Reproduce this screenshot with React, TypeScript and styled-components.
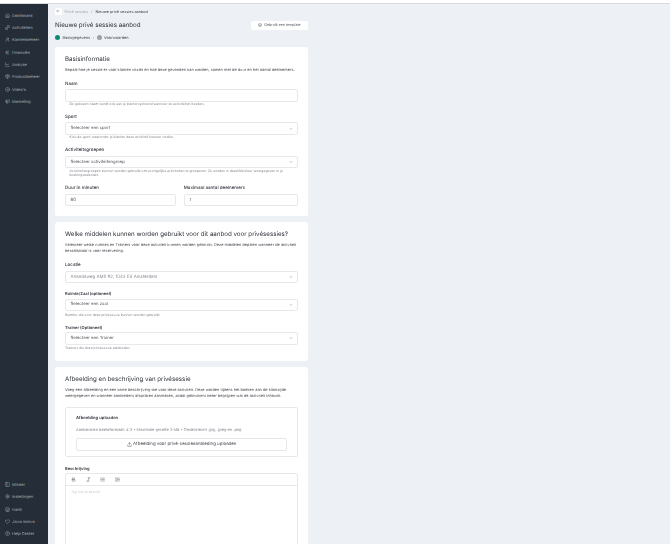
import React from "react";
import styled, { createGlobalStyle } from "styled-components";
import {
  Home, Dumbbell, UserRound, Euro, ChartLine, Package, Disc, Megaphone, PanelLeft, Settings, Store, Heart, CircleHelp,
  ArrowLeft, ChevronDown, Layers, Upload, Bold, Italic, List, ListOrdered,
} from "lucide-react";

const Global = createGlobalStyle`
  html, body { margin: 0; padding: 0; height: 544px; overflow: hidden; background: #edf0f5; }
  body { font-family: Inter, "Liberation Sans", sans-serif; color: #2b2f36; text-rendering: geometricPrecision; }
  * { box-sizing: border-box; }
`;

const Shell = styled.div`
  height: 544px;
  display: flex;
  flex-direction: column;
  overflow: hidden;
  filter: blur(0.35px);
`;
const TopStrip = styled.div`
  height: 4px;
  flex: none;
  background: #fff;
  border-bottom: 1px solid #d5d9df;
`;
const Body = styled.div`
  flex: 1;
  min-height: 0;
  display: flex;
`;
const Sidebar = styled.nav`
  width: 48px;
  flex: none;
  background: #252d38;
  display: flex;
  flex-direction: column;
  justify-content: space-between;
  padding: 5px 0 4px 5px;
`;
const NavGroup = styled.div`
  display: flex;
  flex-direction: column;
`;
const NavItem = styled.div`
  height: 12.35px;
  display: flex;
  align-items: center;
  gap: 2px;
  font-size: 3.95px;
  color: #a0a7b0;
  white-space: nowrap;
  svg { width: 5px; height: 5px; flex: none; stroke: #a6adb6; }
`;
const Main = styled.main`
  flex: 1;
  min-width: 0;
  padding: 3px 0 0 7px;
  overflow: hidden;
`;
const Column = styled.div`
  width: 253px;
  display: flex;
  flex-direction: column;
`;
const Crumbs = styled.div`
  height: 8px;
  display: flex;
  align-items: center;
  font-size: 3.8px;
  color: #a2a7af;
  gap: 3px;
`;
const BackButton = styled.span`
  width: 6.5px;
  height: 7px;
  background: #fff;
  border-radius: 1.5px;
  display: flex;
  align-items: center;
  justify-content: center;
  svg { width: 4px; height: 4px; stroke: #555; }
`;
const CrumbCurrent = styled.span`
  color: #3a3e45;
`;
const TitleRow = styled.div`
  display: flex;
  align-items: center;
  justify-content: space-between;
  margin-top: 5px;
  height: 10px;
`;
const PageTitle = styled.h1`
  margin: 0;
  font-size: 6.2px;
  font-weight: 400;
  color: #2a2e35;
`;
const TemplateButton = styled.button`
  width: 57px;
  height: 9px;
  padding: 0;
  background: #fff;
  border: 0;
  border-radius: 2px;
  font: inherit;
  font-size: 3.6px;
  color: #4a4e55;
  display: flex;
  align-items: center;
  justify-content: center;
  gap: 2px;
  svg { width: 4px; height: 4px; }
`;
const Steps = styled.div`
  display: flex;
  align-items: center;
  height: 6px;
  margin-top: 4.5px;
  font-size: 3.9px;
  color: #4c5057;
`;
const StepDot = styled.span<{ $active?: boolean }>`
  width: 5px;
  height: 5px;
  border-radius: 50%;
  background: ${(p) => (p.$active ? "#0e8a74" : "#9ba1a8")};
  margin-right: 2.4px;
`;
const StepSep = styled.span`
  margin: 0 2.5px;
  color: #9aa0a8;
`;
const Card = styled.section`
  background: #fff;
  border-radius: 2.5px;
  padding: 9px 10px 10px;
  margin-top: 6px;
  display: flex;
  flex-direction: column;
`;
const CardTitle = styled.h2`
  margin: 0;
  font-size: 6.2px;
  line-height: 8px;
  font-weight: 400;
  color: #2a2e35;
`;
const CardDesc = styled.p`
  margin: 3px 0 0;
  font-size: 3.88px;
  line-height: 6px;
  color: #4d5158;
`;
const Field = styled.div<{ $top?: number }>`
  display: flex;
  flex-direction: column;
  min-width: 0;
  margin-top: ${(p) => p.$top ?? 0}px;
`;
const Label = styled.label<{ $compact?: boolean }>`
  font-size: ${(p) => (p.$compact ? 4.1 : 4.5)}px;
  line-height: 5px;
  font-weight: ${(p) => (p.$compact ? 600 : 500)};
  color: #33373e;
  margin-bottom: 2.5px;
`;
const Input = styled.div`
  height: 12.5px;
  background: #fff;
  border: 0.5px solid #e6e8ec;
  border-radius: 2px;
  display: flex;
  align-items: center;
  justify-content: space-between;
  padding: 0 4.5px;
  font-size: 4.3px;
  color: #4f535a;
  svg { width: 4px; height: 4px; stroke: #555; }
`;
const MutedValue = styled.span`
  font-size: 4.4px;
  color: #8a8e95;
`;
const Hint = styled.div<{ $flush?: boolean }>`
  font-size: 3.4px;
  line-height: 4.6px;
  color: #80848b;
  margin-top: ${(p) => (p.$flush ? 1.5 : 0.5)}px;
  padding-left: ${(p) => (p.$flush ? 0 : 4.5)}px;
`;
const Row = styled.div`
  display: grid;
  grid-template-columns: 111fr 114fr;
  gap: 7.5px;
  margin-top: 8.5px;
`;
const UploadBox = styled.div`
  border: 0.5px solid #e6e8ec;
  border-radius: 2px;
  margin-top: 8px;
  padding: 8.5px 10px 0;
  height: 50.3px;
`;
const UploadTitle = styled.div`
  font-size: 4.2px;
  line-height: 5px;
  font-weight: 600;
  color: #33373e;
`;
const UploadInfo = styled.div`
  font-size: 3.94px;
  line-height: 5px;
  color: #8a8e95;
  margin-top: 5.6px;
`;
const UploadButton = styled.div`
  height: 12.7px;
  margin-top: 5.9px;
  border: 0.5px solid #e6e8ec;
  border-radius: 2px;
  display: flex;
  align-items: center;
  justify-content: center;
  gap: 1.5px;
  font-size: 4.4px;
  color: #4a4e55;
  svg { width: 5px; height: 5px; }
`;
const Editor = styled.div`
  border: 0.5px solid #e6e8ec;
  border-radius: 2px;
  height: 140px;
`;
const Toolbar = styled.div`
  height: 12px;
  border-bottom: 0.5px solid #e6e8ec;
  display: flex;
  align-items: center;
  gap: 9.5px;
  padding-left: 5px;
  svg { width: 5px; height: 5px; stroke: #444; }
`;
const Placeholder = styled.div`
  padding: 3.5px 5px;
  font-size: 3.4px;
  line-height: 5px;
  color: #c3c6cb;
`;

const top = [
  [Home, "Dashboard"], [Dumbbell, "Activiteiten"], [UserRound, "Klantenbeheer"], [Euro, "Financiën"],
  [ChartLine, "Analyse"], [Package, "Productbeheer"], [Disc, "Video's"], [Megaphone, "Marketing"],
] as const;
const bottom = [
  [PanelLeft, "Minder"], [Settings, "Instellingen"], [Store, "Hanti"], [Heart, "Jouw bonus"], [CircleHelp, "Help Center"],
] as const;

function Select({ children, muted }: { children: string; muted?: boolean }) {
  return (
    <Input>
      {muted ? <MutedValue>{children}</MutedValue> : <span>{children}</span>}
      <ChevronDown />
    </Input>
  );
}

export default function App() {
  return (
    <Shell>
      <Global />
      <TopStrip />
      <Body>
        <Sidebar>
          <NavGroup>
            {top.map(([I, t]) => <NavItem key={t}><I />{t}</NavItem>)}
          </NavGroup>
          <NavGroup>
            {bottom.map(([I, t]) => <NavItem key={t}><I />{t}</NavItem>)}
          </NavGroup>
        </Sidebar>
        <Main>
          <Column>
            <Crumbs>
              <BackButton><ArrowLeft /></BackButton>
              <span>Privé sessies</span>
              <span>/</span>
              <CrumbCurrent>Nieuwe privé sessies aanbod</CrumbCurrent>
            </Crumbs>
            <TitleRow>
              <PageTitle>Nieuwe privé sessies aanbod</PageTitle>
              <TemplateButton><Layers />Gebruik een template</TemplateButton>
            </TitleRow>
            <Steps>
              <StepDot $active />Basisgegevens
              <StepSep>›</StepSep>
              <StepDot />Voorwaarden
            </Steps>
            <Card>
              <CardTitle>Basisinformatie</CardTitle>
              <CardDesc>Bepaal hoe je sessie er voor klanten uitziet en hoe deze gevonden kan worden, samen met de duur en het aantal deelnemers.</CardDesc>
              <Field $top={9}>
                <Label>Naam</Label>
                <Input />
                <Hint>De gekozen naam wordt ook aan je klanten getoond wanneer ze activiteiten boeken.</Hint>
              </Field>
              <Field $top={8.2}>
                <Label>Sport</Label>
                <Select>Selecteer een sport</Select>
                <Hint>Kies de sport waaronder je klanten deze activiteit kunnen vinden.</Hint>
              </Field>
              <Field $top={8.4}>
                <Label>Activiteitsgroepen</Label>
                <Select>Selecteer activiteitengroep</Select>
                <Hint>Activiteitengroepen kunnen worden gebruikt om soortgelijke activiteiten te groeperen. Ze worden in dezelfde kleur weergegeven in je boekingskalender.</Hint>
              </Field>
              <Row>
                <Field>
                  <Label>Duur in minuten</Label>
                  <Input>60</Input>
                </Field>
                <Field>
                  <Label>Maximaal aantal deelnemers</Label>
                  <Input>1</Input>
                </Field>
              </Row>
            </Card>
            <Card>
              <CardTitle>Welke middelen kunnen worden gebruikt voor dit aanbod voor privésessies?</CardTitle>
              <CardDesc>Selecteer welke ruimtes en Trainers voor deze activiteit kunnen worden gebruikt. Deze middelen bepalen wanneer de activiteit beschikbaar is voor reservering.</CardDesc>
              <Field $top={9}>
                <Label>Locatie</Label>
                <Select muted>Arlandaweg AMS 92, 1043 EX Amsterdam</Select>
              </Field>
              <Field $top={7.7}>
                <Label $compact>Ruimte/Zaal (optioneel)</Label>
                <Select>Selecteer een zaal</Select>
                <Hint $flush>Ruimtes die voor deze privésessie kunnen worden gebruikt</Hint>
              </Field>
              <Field $top={7.5}>
                <Label $compact>Trainer (Optioneel)</Label>
                <Select>Selecteer een Trainer</Select>
                <Hint $flush>Trainers die deze privésessie aanbieden.</Hint>
              </Field>
            </Card>
            <Card>
              <CardTitle>Afbeelding en beschrijving van privésessie</CardTitle>
              <CardDesc>Voeg een afbeelding en een korte beschrijving toe voor deze activiteit. Deze worden tijdens het boeken aan de klantzijde weergegeven en wanneer aanbieders afspraken aanmaken, zodat gebruikers beter begrijpen wat de activiteit inhoudt.</CardDesc>
              <UploadBox>
                <UploadTitle>Afbeelding uploaden</UploadTitle>
                <UploadInfo>Aanbevolen beeldformaat: 4:3 • Maximale grootte 3 Mb • Ondersteunt .jpg, .jpeg en .png</UploadInfo>
                <UploadButton><Upload />Afbeelding voor privé-sessieaanbieding uploaden</UploadButton>
              </UploadBox>
              <Field $top={8.8}>
                <Label $compact>Beschrijving</Label>
                <Editor>
                  <Toolbar><Bold /><Italic /><List /><ListOrdered /></Toolbar>
                  <Placeholder>Typ hier je bericht</Placeholder>
                </Editor>
              </Field>
            </Card>
          </Column>
        </Main>
      </Body>
    </Shell>
  );
}
